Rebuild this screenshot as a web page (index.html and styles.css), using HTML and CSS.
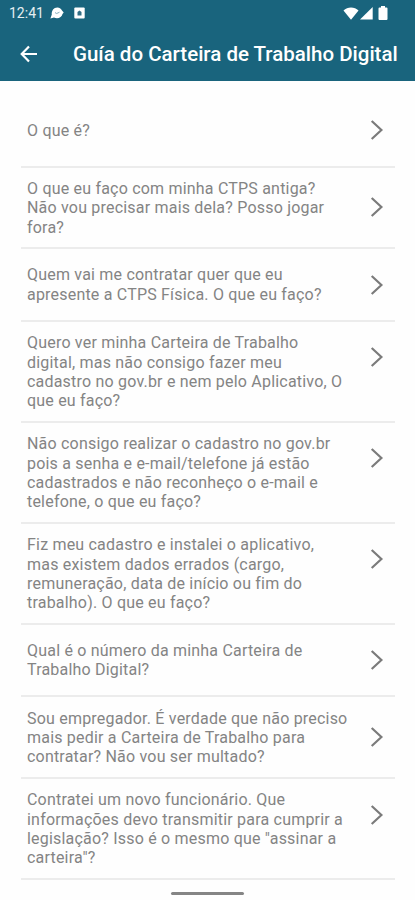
FILE: index.html
```html
<!DOCTYPE html>
<html lang="pt-BR">
<head>
<meta charset="utf-8">
<meta name="viewport" content="width=device-width">
<title>Guía do Carteira de Trabalho Digital</title>
<link rel="stylesheet" href="styles.css">
</head>
<body>
<svg class="defs" aria-hidden="true"><symbol id="chevron" viewBox="0 0 14 22"><path d="M1.7 2 L11.4 11 L1.7 20" fill="none" stroke="currentColor" stroke-width="2.2"/></symbol></svg>
<header class="top">
  <div class="status">
    <span class="clock">12:41</span>
    <svg class="chat" viewBox="0 0 14 12"><path d="M0.4 11.6 L1.8 7.6 C1.3 3.6 3.8 .4 7.3 .4 C9.7 .4 11.400 1.800 12 3.600 L13.700 5.500 L12.500 7 C12 9.600 9.700 11.200 7 11.200 C5.800 11.200 4.900 10.900 4 10.400 Z" fill="#fff"/><path d="M5 5.600 L6.700 6.500 L9.500 5.200" fill="none" stroke="#77a5b5" stroke-width=".9"/></svg>
    <svg class="square" viewBox="0 0 11 12"><rect x=".3" y=".5" width="10.400" height="11" rx="1" fill="#fff"/><path d="M3.500 8.500 V5 L5.500 3.500 L7.500 5 V8.500 Z" fill="#326f86"/></svg>
    <span class="signals">
      <svg class="wifi" viewBox="0 0 16 13"><path d="M.5 3.500 C4.500 -.4 11.500 -.4 15.500 3.500 L8 12.700 Z" fill="#fff"/></svg>
      <svg class="cell" viewBox="0 0 13 13"><path d="M12.700 0 V12.600 H0 Z" fill="#fff"/></svg>
      <svg class="battery" viewBox="0 0 10 14"><path d="M3 0 H7 V1.500 H8.500 Q9.500 1.500 9.500 2.500 V13 Q9.500 14 8.500 14 H1.500 Q.5 14 .5 13 V2.500 Q.5 1.500 1.500 1.500 H3 Z" fill="#fff"/></svg>
    </span>
  </div>
  <div class="bar">
    <svg class="back" viewBox="0 0 18 18"><path d="M17 9 H2 M9 1.500 L1.700 9 L9 16.500" fill="none" stroke="#fff" stroke-width="2.200"/></svg>
    <h1>Guía do Carteira de Trabalho Digital</h1>
  </div>
</header>
<main class="list">
  <div class="row"><p>O que é?</p><svg class="chev"><use href="#chevron"/></svg></div>
  <div class="row mid"><p>O que eu faço com minha CTPS antiga?<br>Não vou precisar mais dela? Posso jogar<br>fora?</p><svg class="chev"><use href="#chevron"/></svg></div>
  <div class="row"><p>Quem vai me contratar quer que eu<br>apresente a CTPS Física. O que eu faço?</p><svg class="chev"><use href="#chevron"/></svg></div>
  <div class="row tall"><p>Quero ver minha Carteira de Trabalho<br>digital, mas não consigo fazer meu<br>cadastro no gov.br e nem pelo Aplicativo, O<br>que eu faço?</p><svg class="chev"><use href="#chevron"/></svg></div>
  <div class="row tall"><p>Não consigo realizar o cadastro no gov.br<br>pois a senha e e-mail/telefone já estão<br>cadastrados e não reconheço o e-mail e<br>telefone, o que eu faço?</p><svg class="chev"><use href="#chevron"/></svg></div>
  <div class="row tall"><p>Fiz meu cadastro e instalei o aplicativo,<br>mas existem dados errados (cargo,<br>remuneração, data de início ou fim do<br>trabalho). O que eu faço?</p><svg class="chev"><use href="#chevron"/></svg></div>
  <div class="row"><p>Qual é o número da minha Carteira de<br>Trabalho Digital?</p><svg class="chev"><use href="#chevron"/></svg></div>
  <div class="row mid"><p>Sou empregador. É verdade que não preciso<br>mais pedir a Carteira de Trabalho para<br>contratar? Não vou ser multado?</p><svg class="chev"><use href="#chevron"/></svg></div>
  <div class="row tall"><p>Contratei um novo funcionário. Que<br>informações devo transmitir para cumprir a<br>legislação? Isso é o mesmo que "assinar a<br>carteira"?</p><svg class="chev"><use href="#chevron"/></svg></div>
</main>
<div class="handle"></div>
</body>
</html>
```
FILE: styles.css
```css
* { box-sizing: border-box; }
body {
  margin: 0;
  height: 900px;
  overflow: hidden;
  background: #fefefe;
  font-family: Roboto, "Liberation Sans", sans-serif;
  color: #848484;
}
svg { display: block; flex: none; }
.defs { display: none; }
.top { height: 81px; background: #19647d; color: #fff; }
.status { display: flex; align-items: center; height: 26px; padding: 0 27px 0 9px; }
.clock { width: 35px; font-size: 14px; color: #e4eef1; }
.chat { width: 14px; height: 12px; margin-left: 6px; }
.square { width: 11px; height: 12px; margin-left: 10px; }
.signals { display: flex; align-items: center; margin-left: auto; }
.wifi { width: 16px; height: 13px; }
.cell { width: 13px; height: 13px; margin-left: 1px; }
.battery { width: 10px; height: 14px; margin-left: 5px; }
.bar { display: flex; align-items: center; height: 55px; padding-left: 20px; }
.back { width: 18px; height: 18px; }
h1 { margin: 0 0 0 35px; font-size: 20.500px; font-weight: 500; line-height: 24px; white-space: nowrap; }
.list { padding: 14px 20px 0 21px; }
.row {
  display: flex;
  align-items: center;
  justify-content: space-between;
  height: 72.700px;
  padding: 0 11px 0 6px;
  border-bottom: 2px solid #ececec;
}
.mid { height: 81.600px; }
.tall { height: 100.950px; }
.tall .chev { align-self: flex-start; margin-top: 24.500px; }
p { margin: 0; font-size: 16px; line-height: 19.300px; letter-spacing: .2px; white-space: nowrap; }
.mid p, .tall p { padding-top: 1px; }
.chev { width: 14px; height: 22px; color: #7b7b7b; }
.handle { width: 73px; height: 3px; margin: 12px 0 0 171px; border-radius: 2px; background: #858585; }
```
